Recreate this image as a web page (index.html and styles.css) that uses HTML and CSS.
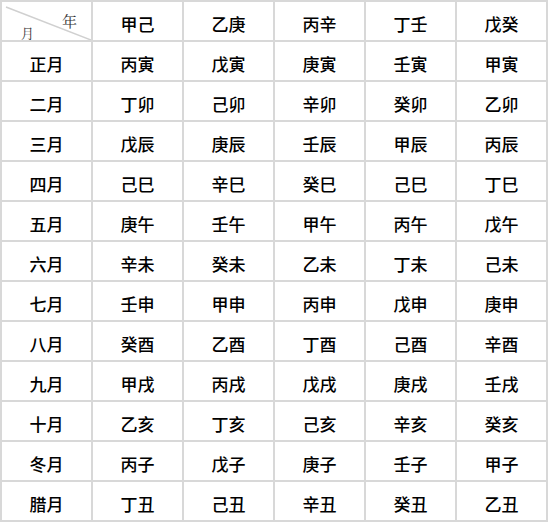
FILE: index.html
```html
<!DOCTYPE html>
<html lang="zh">
<head>
<meta charset="utf-8">
<link rel="stylesheet" href="styles.css">
</head>
<body>
<div class="table">
  <div class="cell corner">
    <svg class="diag" viewBox="0 0 89 38" preserveAspectRatio="none"><line x1="4" y1="5" x2="89" y2="38" stroke="#d0d0d0" stroke-width="1.5"/></svg>
    <span class="yr">年</span>
    <span class="mo">月</span>
  </div>
  <div class="cell">甲己</div><div class="cell">乙庚</div><div class="cell">丙辛</div><div class="cell">丁壬</div><div class="cell">戊癸</div>
  <div class="cell">正月</div><div class="cell">丙寅</div><div class="cell">戊寅</div><div class="cell">庚寅</div><div class="cell">壬寅</div><div class="cell">甲寅</div>
  <div class="cell">二月</div><div class="cell">丁卯</div><div class="cell">己卯</div><div class="cell">辛卯</div><div class="cell">癸卯</div><div class="cell">乙卯</div>
  <div class="cell">三月</div><div class="cell">戊辰</div><div class="cell">庚辰</div><div class="cell">壬辰</div><div class="cell">甲辰</div><div class="cell">丙辰</div>
  <div class="cell">四月</div><div class="cell">己巳</div><div class="cell">辛巳</div><div class="cell">癸巳</div><div class="cell">己巳</div><div class="cell">丁巳</div>
  <div class="cell">五月</div><div class="cell">庚午</div><div class="cell">壬午</div><div class="cell">甲午</div><div class="cell">丙午</div><div class="cell">戊午</div>
  <div class="cell">六月</div><div class="cell">辛未</div><div class="cell">癸未</div><div class="cell">乙未</div><div class="cell">丁未</div><div class="cell">己未</div>
  <div class="cell">七月</div><div class="cell">壬申</div><div class="cell">甲申</div><div class="cell">丙申</div><div class="cell">戊申</div><div class="cell">庚申</div>
  <div class="cell">八月</div><div class="cell">癸酉</div><div class="cell">乙酉</div><div class="cell">丁酉</div><div class="cell">己酉</div><div class="cell">辛酉</div>
  <div class="cell">九月</div><div class="cell">甲戌</div><div class="cell">丙戌</div><div class="cell">戊戌</div><div class="cell">庚戌</div><div class="cell">壬戌</div>
  <div class="cell">十月</div><div class="cell">乙亥</div><div class="cell">丁亥</div><div class="cell">己亥</div><div class="cell">辛亥</div><div class="cell">癸亥</div>
  <div class="cell">冬月</div><div class="cell">丙子</div><div class="cell">戊子</div><div class="cell">庚子</div><div class="cell">壬子</div><div class="cell">甲子</div>
  <div class="cell">腊月</div><div class="cell">丁丑</div><div class="cell">己丑</div><div class="cell">辛丑</div><div class="cell">癸丑</div><div class="cell">乙丑</div>
</div>
</body>
</html>
```
FILE: styles.css
```css
html, body {
  margin: 0;
  padding: 0;
  background: #ffffff;
}
body {
  font-family: "Noto Sans CJK SC", "Noto Sans", sans-serif;
}
.table {
  display: grid;
  grid-template-columns: repeat(6, 89px);
  grid-auto-rows: 38px;
  gap: 2px;
  padding: 2px;
  width: max-content;
  background: #d8d8d8;
}
.cell {
  background: #ffffff;
  display: flex;
  align-items: center;
  justify-content: center;
  font-size: 17px;
  font-weight: 500;
  color: #000000;
  padding-top: 4px;
  box-sizing: border-box;
}
.corner {
  position: relative;
  padding: 0;
}
.diag {
  position: absolute;
  left: 0;
  top: 0;
  width: 100%;
  height: 100%;
}
.yr {
  position: absolute;
  left: 60px;
  top: 11px;
  font-size: 15px;
  font-weight: 400;
  line-height: 1;
  color: #333333;
  font-family: "Noto Serif CJK SC", "Noto Sans CJK SC", serif;
}
.mo {
  position: absolute;
  left: 19px;
  top: 24px;
  font-size: 13px;
  font-weight: 400;
  line-height: 1;
  color: #333333;
  font-family: "Noto Serif CJK SC", "Noto Sans CJK SC", serif;
}
```
